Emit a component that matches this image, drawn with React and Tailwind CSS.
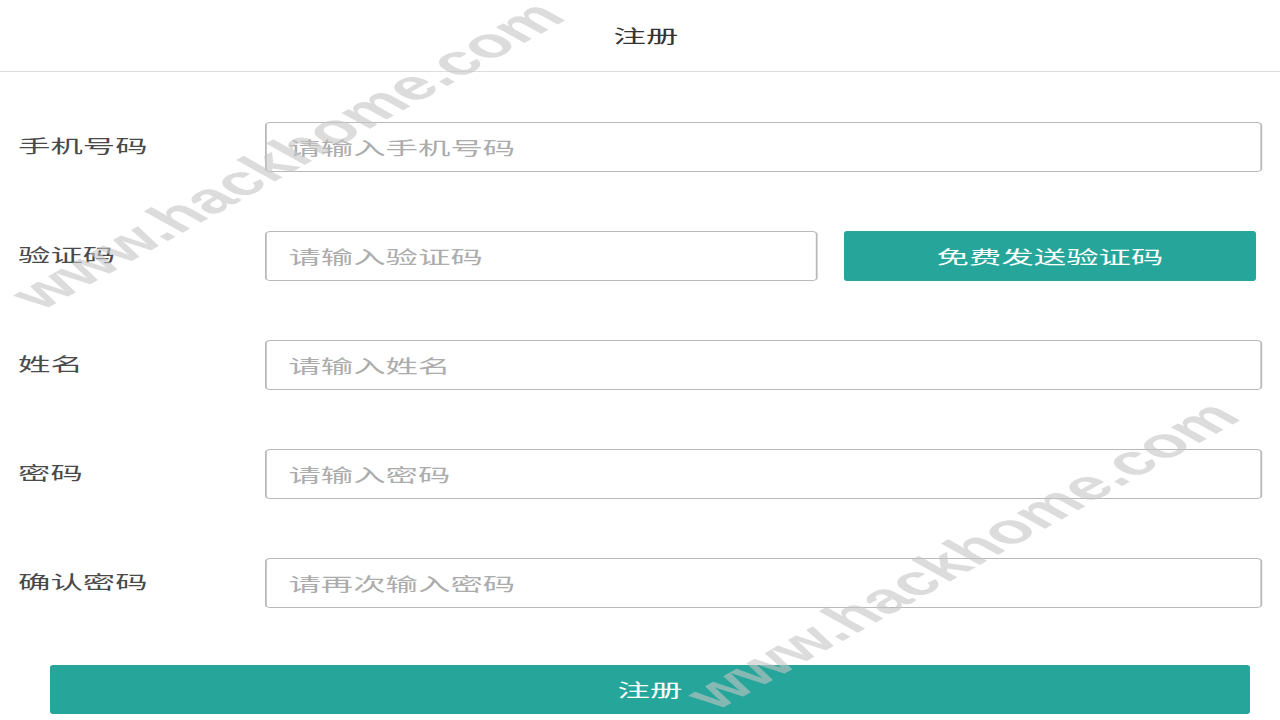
const fields = [
  { label: '手机号码', placeholder: '请输入手机号码' },
  { label: '验证码', placeholder: '请输入验证码', code: true },
  { label: '姓名', placeholder: '请输入姓名' },
  { label: '密码', placeholder: '请输入密码' },
  { label: '确认密码', placeholder: '请再次输入密码' },
];

const cjk = "font-['Noto_Sans_CJK_SC','Noto_Sans',sans-serif]";

function Watermark({ className }) {
  return (
    <div className={`pointer-events-none absolute w-0 h-0 ${className}`}>
      <div className="w-max whitespace-nowrap font-['Liberation_Sans',Arial,sans-serif] font-bold text-[42px] leading-none text-[#c4c4c4]/60 [transform:translate(-50%,-50%)_scaleX(1.8)_rotate(-45deg)]">
        www.hackhome.com
      </div>
    </div>
  );
}

export default function App() {
  return (
    <div className={`relative w-[1280px] h-[720px] overflow-hidden bg-white ${cjk}`}>
      <header className="h-[72px] pl-3 flex items-center justify-center border-b border-[#dedede]">
        <span className="inline-block scale-x-180 text-[18px] text-[#333]">注册</span>
      </header>

      <div className="pt-[50px] flex flex-col gap-[59px]">
        {fields.map(f => (
          <div key={f.label} className="flex items-center h-[50px]">
            <div className="w-[265px] shrink-0 pl-[18px] -mt-1">
              <span className="inline-block origin-left scale-x-180 text-[18px] text-[#4a4a4a]">{f.label}</span>
            </div>
            {f.code ? (
              <div className="flex h-full">
                <div className="w-[552px] h-full">
                  <input
                    type="text"
                    placeholder={f.placeholder}
                    className="w-[calc(100%/1.8)] h-full origin-left scale-x-180 border border-[#b9b9b9] rounded-[3px] pl-[12px] text-[18px] outline-none placeholder:text-[#acacac]"
                  />
                </div>
                <button className="ml-[27px] w-[412px] h-full rounded-[3px] bg-[#26a69a] text-white text-[18px]">
                  <span className="inline-block scale-x-180">免费发送验证码</span>
                </button>
              </div>
            ) : (
              <div className="flex-1 mr-[18px] h-full">
                <input
                  type={f.label.includes('密码') ? 'password' : 'text'}
                  placeholder={f.placeholder}
                  className="w-[calc(100%/1.8)] h-full origin-left scale-x-180 border border-[#b9b9b9] rounded-[3px] pl-[12px] text-[18px] outline-none placeholder:text-[#acacac]"
                />
              </div>
            )}
          </div>
        ))}
      </div>

      <div className="px-[50px] pr-[30px] mt-[57px]">
        <button className="w-full h-[49px] rounded-[3px] bg-[#26a69a] text-white text-[18px]">
          <span className="inline-block scale-x-180">注册</span>
        </button>
      </div>

      <Watermark className="left-[287px] top-[155px]" />
      <Watermark className="left-[962px] top-[555px]" />
    </div>
  );
}
